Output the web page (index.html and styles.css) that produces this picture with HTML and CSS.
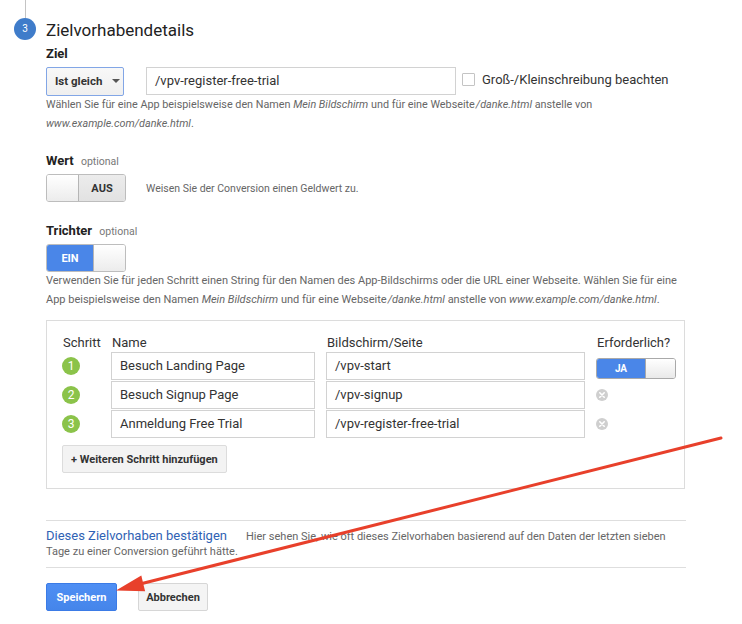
FILE: index.html
```html
<!DOCTYPE html>
<html lang="de">
<head>
<meta charset="utf-8">
<title>Zielvorhabendetails</title>
<link rel="stylesheet" href="styles.css">
</head>
<body>
<div class="page">
  <div class="step">
    <div class="rail">
      <div class="rail-line"></div>
      <div class="step-num">3</div>
    </div>
    <div class="content">
      <h2 class="title">Zielvorhabendetails</h2>
      <div class="label first-label">Ziel</div>
      <div class="goal-row">
        <div class="select">Ist gleich<span class="caret"></span></div>
        <div class="input goal-input">/vpv-register-free-trial</div>
        <span class="checkbox"></span>
        <span class="check-label">Groß-/Kleinschreibung beachten</span>
      </div>
      <p class="help goal-help">Wählen Sie für eine App beispielsweise den Namen <i>Mein Bildschirm</i> und für eine Webseite<i class="tight">/danke.html</i> anstelle von <i>www.example.com/danke.html</i>.</p>

      <div class="label field-label">Wert <span class="opt">optional</span></div>
      <div class="toggle-row">
        <div class="toggle toggle-off"><span class="knob"></span><span class="toggle-text">AUS</span></div>
        <span class="toggle-desc">Weisen Sie der Conversion einen Geldwert zu.</span>
      </div>

      <div class="label field-label trichter">Trichter <span class="opt">optional</span></div>
      <div class="toggle-row">
        <div class="toggle toggle-on"><span class="toggle-text">EIN</span><span class="knob"></span></div>
      </div>
      <p class="help funnel-help">Verwenden Sie für jeden Schritt einen String für den Namen des App-Bildschirms oder die URL einer Webseite. Wählen Sie für eine App beispielsweise den Namen <i>Mein Bildschirm</i> und für eine Webseite<i class="tight">/danke.html</i> anstelle von <i>www.example.com/danke.html</i>.</p>

      <div class="funnel">
        <div class="funnel-grid">
          <div class="th">Schritt</div>
          <div class="th th-name">Name</div>
          <div class="th th-name">Bildschirm/Seite</div>
          <div class="th th-req">Erforderlich?</div>

          <div class="cell"><span class="num">1</span></div>
          <div class="input">Besuch Landing Page</div>
          <div class="input">/vpv-start</div>
          <div class="cell"><div class="mini-toggle"><span class="mini-text">JA</span><span class="mini-knob"></span></div></div>

          <div class="cell"><span class="num">2</span></div>
          <div class="input">Besuch Signup Page</div>
          <div class="input">/vpv-signup</div>
          <div class="cell"><svg class="remove" viewBox="0 0 12 12" width="12" height="12"><circle cx="6" cy="6" r="6" fill="#cfcfcf"/><path d="M3.8 3.8 L8.2 8.2 M8.2 3.8 L3.8 8.2" stroke="#fff" stroke-width="1.6" stroke-linecap="round"/></svg></div>

          <div class="cell"><span class="num">3</span></div>
          <div class="input">Anmeldung Free Trial</div>
          <div class="input">/vpv-register-free-trial</div>
          <div class="cell"><svg class="remove" viewBox="0 0 12 12" width="12" height="12"><circle cx="6" cy="6" r="6" fill="#cfcfcf"/><path d="M3.8 3.8 L8.2 8.2 M8.2 3.8 L3.8 8.2" stroke="#fff" stroke-width="1.6" stroke-linecap="round"/></svg></div>
        </div>
        <button class="add-btn">+ Weiteren Schritt hinzufügen</button>
      </div>

      <div class="verify">
        <span class="verify-link">Dieses Zielvorhaben bestätigen</span><span class="verify-text">Hier sehen Sie, wie oft dieses Zielvorhaben basierend auf den Daten der letzten sieben<br>Tage zu einer Conversion geführt hätte.</span>
      </div>

      <div class="actions">
        <button class="btn btn-primary">Speichern</button>
        <button class="btn btn-secondary">Abbrechen</button>
      </div>
    </div>
  </div>

  <svg class="arrow" viewBox="0 0 742 624" width="742" height="624">
    <line x1="721" y1="438" x2="140" y2="584" stroke="#e8402b" stroke-width="3" stroke-linecap="round"/>
    <polygon points="116,590.5 141.3,575.4 145.1,591.2" fill="#e8402b"/>
  </svg>
</div>
</body>
</html>
```

FILE: styles.css
```css
body {
  margin: 0;
  background: #fff;
  font-family: Roboto, "Liberation Sans", Arial, sans-serif;
  color: #333;
}

.page {
  position: relative;
  width: 742px;
  height: 624px;
  overflow: hidden;
}

.step {
  display: flex;
}

.rail {
  width: 46px;
  flex: none;
}

.rail-line {
  width: 1px;
  height: 18px;
  margin-left: 25px;
  background: #c4c4c4;
}

.step-num {
  width: 22px;
  height: 22px;
  margin-left: 14px;
  border-radius: 50%;
  background: #3f7cca;
  color: #fff;
  font-size: 10px;
  line-height: 22px;
  text-align: center;
}

.content {
  width: 640px;
}

.title {
  margin: 19px 0 0;
  font-size: 17px;
  font-weight: 400;
  line-height: 22px;
  color: #222;
}

.label {
  font-size: 13px;
  font-weight: 700;
  line-height: 18px;
  height: 18px;
  color: #222;
}

.first-label {
  margin-top: 4px;
}

.goal-row {
  display: flex;
  align-items: center;
  height: 28px;
  margin-top: 4px;
}

.select {
  box-sizing: border-box;
  width: 78px;
  height: 29px;
  display: flex;
  align-items: center;
  padding-left: 8px;
  border: 1px solid #82a6e6;
  border-radius: 2px;
  background: linear-gradient(#f8f8f8, #efefef);
  font-size: 11.5px;
  font-weight: 700;
  color: #333;
}

.caret {
  width: 0;
  height: 0;
  margin-left: 10px;
  border-left: 4px solid transparent;
  border-right: 4px solid transparent;
  border-top: 4px solid #555;
}

.input {
  box-sizing: border-box;
  height: 28px;
  padding: 0 8px;
  border: 1px solid #d2d2d2;
  background: #fff;
  font-size: 13px;
  line-height: 26px;
  color: #333;
  white-space: nowrap;
}

.goal-input {
  width: 310px;
  margin-left: 22px;
}

.checkbox {
  box-sizing: border-box;
  width: 13px;
  height: 13px;
  margin-left: 6px;
  margin-top: -4px;
  border: 1px solid #c4c4c4;
  border-radius: 1px;
  background: #fff;
}

.check-label {
  margin-left: 7px;
  margin-top: -4px;
  font-size: 13px;
  color: #333;
}

.help {
  margin: 0;
  font-size: 11px;
  line-height: 19px;
  color: #666;
}

.goal-help {
  font-size: 10.8px;
}

.help .tight {
  margin-left: 1px;
}

.field-label {
  margin-top: 19px;
}

.trichter {
  margin-top: 20px;
}

.opt {
  margin-left: 4px;
  font-size: 10.5px;
  font-weight: 400;
  line-height: 1;
  color: #777;
}

.toggle-row {
  display: flex;
  align-items: center;
  margin-top: 4px;
}

.toggle {
  box-sizing: border-box;
  display: flex;
  width: 80px;
  height: 28px;
  border: 1px solid #bdbdbd;
  border-radius: 3px;
  overflow: hidden;
}

.knob {
  width: 31px;
  flex: none;
  background: linear-gradient(#ffffff, #ececec);
}

.toggle-off .knob {
  border-right: 1px solid #b5b5b5;
}

.toggle-on .knob {
  border-left: 1px solid #b5b5b5;
}

.toggle-text {
  flex: 1;
  display: flex;
  align-items: center;
  justify-content: center;
  font-size: 11px;
  font-weight: 700;
}

.toggle-off .toggle-text {
  background: linear-gradient(#ececec, #e2e2e2);
  color: #333;
}

.toggle-on .toggle-text {
  background: #4a86e8;
  color: #fff;
}

.toggle-desc {
  margin-left: 20px;
  font-size: 10.5px;
  color: #666;
}

.funnel-help {
  margin-top: -1px;
}

.funnel {
  box-sizing: border-box;
  width: 639px;
  margin-top: 11px;
  padding: 14px 7px 15px 16px;
  border: 1px solid #dcdcdc;
}

.funnel-grid {
  display: grid;
  grid-template-columns: 37px 204px 259px 80px;
  column-gap: 11px;
  row-gap: 1px;
}

.th {
  font-size: 13px;
  line-height: 16px;
  color: #333;
}

.th-name {
  padding-left: 1px;
}

.th-req {
  padding-left: 1px;
  white-space: nowrap;
}

.cell {
  display: flex;
  align-items: center;
}

.num {
  width: 18px;
  height: 18px;
  margin-left: -1px;
  border-radius: 50%;
  background: #8bc34a;
  color: #fff;
  font-size: 12px;
  line-height: 18px;
  text-align: center;
}

.mini-toggle {
  box-sizing: border-box;
  display: flex;
  width: 80px;
  height: 21px;
  margin-top: 4px;
  border: 1px solid #a9a9a9;
  border-radius: 3px;
  overflow: hidden;
}

.mini-text {
  width: 48px;
  display: flex;
  align-items: center;
  justify-content: center;
  background: #4a86e8;
  color: #fff;
  font-size: 10px;
  font-weight: 700;
}

.mini-knob {
  flex: 1;
  border-left: 1px solid #a9a9a9;
  background: linear-gradient(#ffffff, #e9e9e9);
}

.remove {
  display: block;
}

.add-btn {
  display: block;
  box-sizing: border-box;
  height: 28px;
  margin: 7px 0 0 -1px;
  padding: 0 8px;
  border: 1px solid #dcdcdc;
  border-radius: 2px;
  background: #f3f3f3;
  font-family: inherit;
  font-size: 11px;
  font-weight: 700;
  color: #333;
}

.verify {
  margin-top: 31px;
  padding: 8px 0;
  border-top: 1px solid #dedede;
  border-bottom: 1px solid #dedede;
  font-size: 11px;
  line-height: 15px;
}

.verify-link {
  margin-right: 19px;
  font-size: 13px;
  line-height: 1;
  color: #2f62b4;
}

.verify-text {
  color: #666;
}

.actions {
  display: flex;
  gap: 21px;
  margin-top: 15px;
}

.btn {
  box-sizing: border-box;
  height: 28px;
  border-radius: 2px;
  font-family: inherit;
  font-size: 11px;
  font-weight: 700;
  padding: 0;
}

.btn-primary {
  width: 71px;
  border: 1px solid #3b7be6;
  background: linear-gradient(#4f8ff4, #4585ea);
  color: #fff;
}

.btn-secondary {
  width: 70px;
  border: 1px solid #d6d6d6;
  background: #f4f4f4;
  color: #333;
}

.arrow {
  position: absolute;
  top: 0;
  left: 0;
  pointer-events: none;
}
```
